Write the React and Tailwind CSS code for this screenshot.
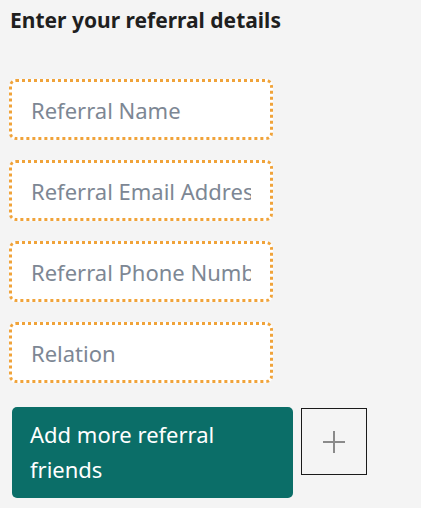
import React from 'react';

function ReferralField({ placeholder }) {
  return (
    <input
      type="text"
      placeholder={placeholder}
      className="w-[264px] h-[61px] rounded-[7px] border-[3px] border-dotted border-[#f0a33a] bg-white pl-[19px] pr-[19px] text-[22px] text-gray-700 placeholder:text-[#7d8794] outline-none"
    />
  );
}

export default function App() {
  const fields = ['Referral Name', 'Referral Email Address', 'Referral Phone Number', 'Relation'];

  return (
    <div className="min-h-screen w-[421px] h-[508px] overflow-hidden bg-[#f4f4f4] font-['Noto_Sans',sans-serif]">
      <div className="pl-[9px] pt-[6px]">
        <h1 className="text-[21px] font-bold text-[#1f1f1f] leading-[28px] pl-[1px]">Enter your referral details</h1>

        <div className="mt-[45px] flex flex-col gap-[20px]">
          {fields.map((f) => (
            <ReferralField key={f} placeholder={f} />
          ))}
        </div>

        <div className="mt-[24px] flex items-start gap-[8px] pl-[3px]">
          <button className="w-[281px] h-[91px] rounded-[5px] bg-[#0b6e68] text-white text-[22px] leading-[35px] text-left pl-[18px] pr-[40px] pt-[1px] pb-[2px]">
            Add more referral friends
          </button>
          <button className="mt-[1px] w-[66px] h-[67px] border-[1.5px] border-[#1a1a1a] flex items-center justify-center">
            <svg width="24" height="24" viewBox="0 0 24 24" fill="none" stroke="#8a8a8a" strokeWidth="2">
              <path d="M12 1v22M1 12h22" />
            </svg>
          </button>
        </div>
      </div>
    </div>
  );
}
